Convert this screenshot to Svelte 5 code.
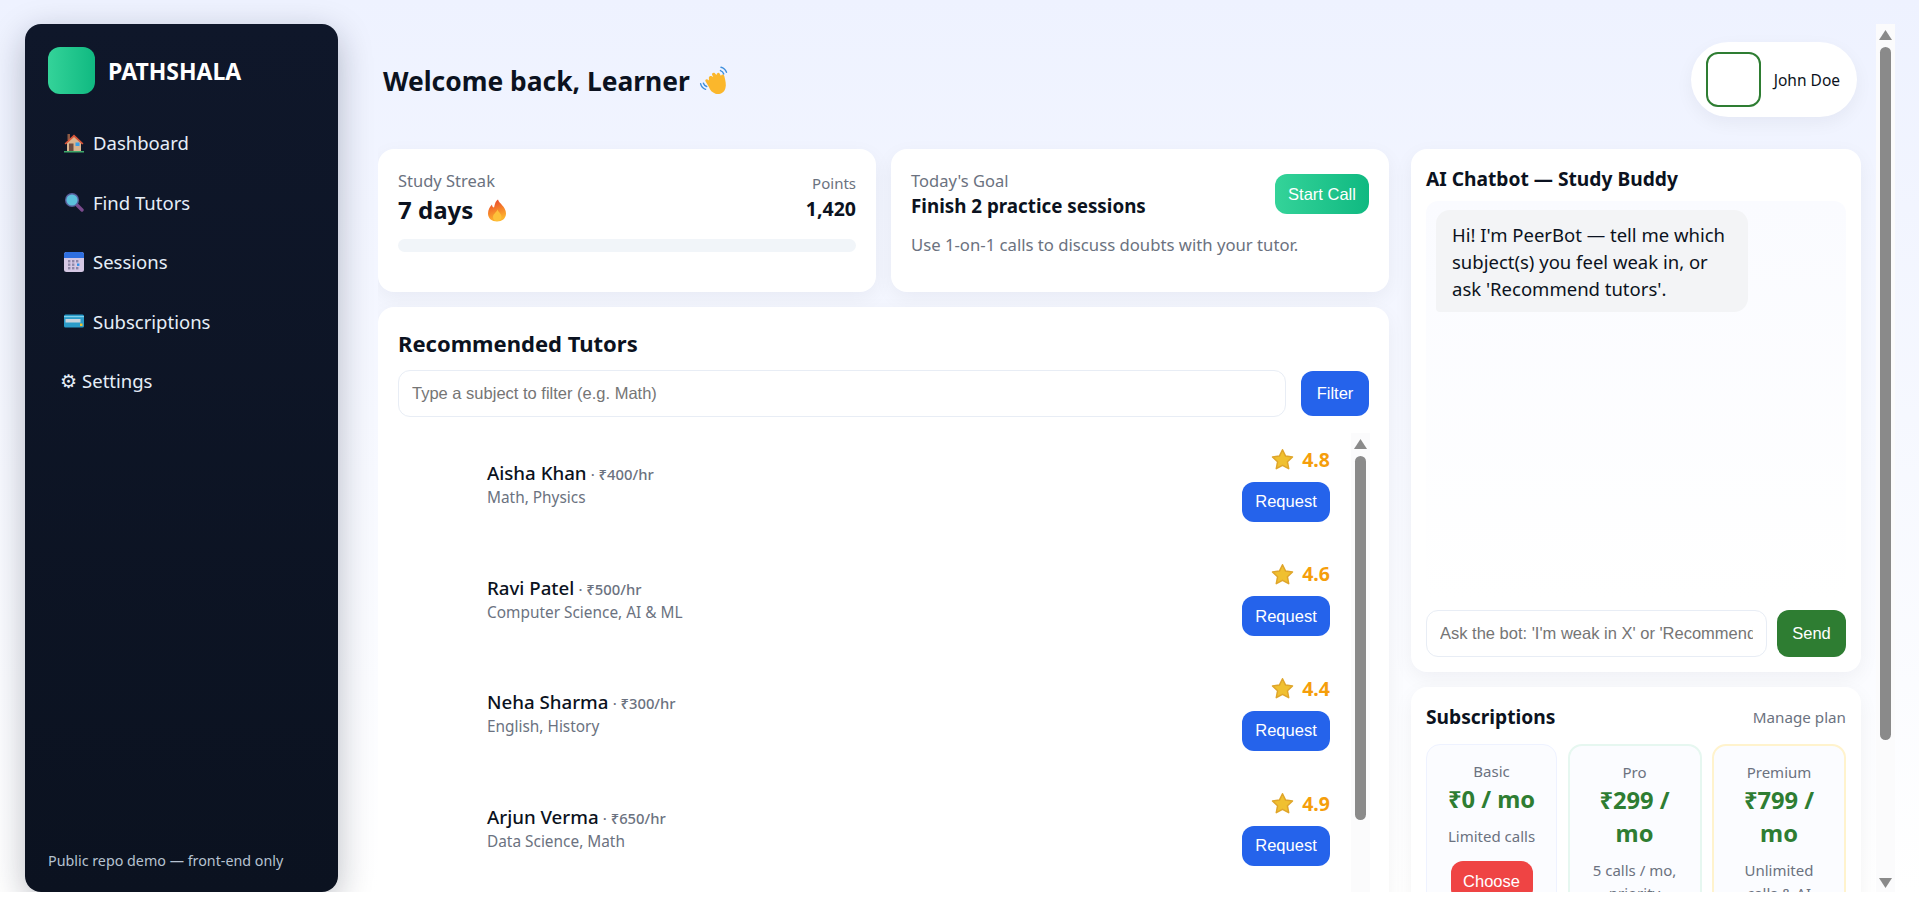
<script>
  const nav = [
    { label: 'Dashboard', icon: 'house' },
    { label: 'Find Tutors', icon: 'search' },
    { label: 'Sessions', icon: 'calendar' },
    { label: 'Subscriptions', icon: 'card' }
  ];

  const tutors = [
    { name: 'Aisha Khan', rate: '₹400/hr', subjects: 'Math, Physics', rating: '4.8' },
    { name: 'Ravi Patel', rate: '₹500/hr', subjects: 'Computer Science, AI & ML', rating: '4.6' },
    { name: 'Neha Sharma', rate: '₹300/hr', subjects: 'English, History', rating: '4.4' },
    { name: 'Arjun Verma', rate: '₹650/hr', subjects: 'Data Science, Math', rating: '4.9' },
    { name: 'Sara Ali', rate: '₹450/hr', subjects: 'Chemistry, Biology', rating: '4.7' }
  ];

  const plans = [
    { name: 'Basic', price: '₹0 / mo', note: 'Limited calls', tone: 'basic', action: true },
    { name: 'Pro', price: '₹299 / mo', note: '5 calls / mo, priority', tone: 'pro', action: false },
    { name: 'Premium', price: '₹799 / mo', note: 'Unlimited calls & AI', tone: 'premium', action: false }
  ];
</script>

{#snippet icon(name)}
  {#if name === 'house'}
    <svg class="emoji" viewBox="0 0 20 20">
      <rect x="3.5" y="1" width="2.5" height="6" fill="#8d5a45" />
      <path d="M3 9 10 3l7 6v9H3z" fill="#d9b48f" />
      <path d="M0.5 10.5 10 1.5l9.5 9-1.3 1L10 4 1.8 11.5z" fill="#d8563a" />
      <rect x="5" y="10.5" width="4.5" height="7.5" fill="#6d4c41" />
      <rect x="11.5" y="9.5" width="4" height="3.5" fill="#3aa0e8" />
      <rect x="0" y="18" width="20" height="1.5" fill="#3fa86b" />
    </svg>
  {:else if name === 'search'}
    <svg class="emoji" viewBox="0 0 20 20">
      <path d="M12.5 12.5 18 18" stroke="#7a4a8c" stroke-width="3.4" stroke-linecap="round" />
      <circle cx="8" cy="8" r="7" fill="#5a5f9e" />
      <circle cx="8" cy="8" r="5.6" fill="#5cc0dc" />
    </svg>
  {:else if name === 'calendar'}
    <svg class="emoji" viewBox="0 0 20 20">
      <rect x="0" y="0" width="20" height="20" rx="2.5" fill="#d5c8e4" />
      <path d="M0 6V2.5A2.5 2.5 0 0 1 2.5 0h15A2.5 2.5 0 0 1 20 2.5V6z" fill="#2f6fe0" />
      <g fill="#8f88a8">
        <rect x="4" y="8" width="2.4" height="2.4" /><rect x="8" y="8" width="2.4" height="2.4" /><rect x="12" y="8" width="2.4" height="2.4" />
        <rect x="4" y="11.5" width="2.4" height="2.4" /><rect x="8" y="11.5" width="2.4" height="2.4" />
        <rect x="4" y="15" width="2.4" height="2.4" /><rect x="8" y="15" width="2.4" height="2.4" /><rect x="12" y="15" width="2.4" height="2.4" />
      </g>
      <rect x="13" y="11.5" width="2.4" height="2.4" fill="#2f8fe8" />
    </svg>
  {:else if name === 'card'}
    <svg class="emoji" viewBox="0 0 20 20">
      <rect x="0" y="3.5" width="20" height="13" rx="1.5" fill="#2b9cc9" />
      <rect x="0" y="5" width="20" height="1.2" fill="#7fd0ea" />
      <rect x="1.5" y="8" width="15" height="3.5" fill="#c9d3dc" />
      <rect x="16" y="12.5" width="2.5" height="2.5" fill="#f2c230" />
    </svg>
  {:else if name === 'fire'}
    <svg class="emoji" viewBox="0 0 20 24">
      <defs>
        <linearGradient id="flame" x1="0" y1="0" x2="0.3" y2="1">
          <stop offset="0" stop-color="#e5392f" />
          <stop offset="0.55" stop-color="#f57f2a" />
          <stop offset="1" stop-color="#fdb52e" />
        </linearGradient>
      </defs>
      <path d="M11 1c1 4 8 7 8 14 0 5-4 8-9 8s-9-3-9-8c0-4 2-7 4-9 0 2 1 3 2 3 1-3 1-6 4-8z" fill="url(#flame)" />
      <path d="M10.5 11c1 3 4 4 4 7.500 0 2.500-2 4-4.500 4s-4-1.500-4-4c0-3 3-4 4.500-7.500z" fill="#fdc13a" />
    </svg>
  {:else if name === 'star'}
    <svg class="emoji" viewBox="0 0 20 20">
      <path d="M10 1.500 12.700 7l6 .8-4.400 4.200 1.100 6L10 15.100 4.600 18l1.100-6L1.300 7.800l6-.8z" fill="#f0c030" stroke="#dfa52a" stroke-width="1.300" stroke-linejoin="round" />
    </svg>
  {:else if name === 'wave'}
    <svg class="emoji" viewBox="0 0 30 30">
      <path d="M9 12c1-2 3-1 4 0l-1-2c-1-2 2-3 3-1l1 1c0-2 2-3 3-1l1 2c0-2 3-2 3 0 1 4 2 8 1 11-1 4-5 6-9 5-3-1-5-3-6-6l-3-5c-1-2 1-3 3-1z" fill="#fbb72c" />
      <path d="M20 3c2 .5 4 2 5 4.500M19.500 6c1.500.5 2.500 1.500 3 3" fill="none" stroke="#3f8fdc" stroke-width="1.300" stroke-linecap="round" />
      <path d="M1.500 18c.5 2 2 4 4.500 5M4 17.500c.5 1.500 1.500 2.500 3 3" fill="none" stroke="#3f8fdc" stroke-width="1.300" stroke-linecap="round" />
    </svg>
  {/if}
{/snippet}

<div class="app">
  <aside class="sidebar">
    <div class="brand">
      <div class="logo"></div>
      <span class="brand-name">PATHSHALA</span>
    </div>
    <nav class="nav">
      {#each nav as item (item.label)}
        <a class="nav-item" href="#top">{@render icon(item.icon)}<span>{item.label}</span></a>
      {/each}
      <a class="nav-item settings" href="#top"><span class="gear">⚙</span><span>Settings</span></a>
    </nav>
    <div class="side-foot">Public repo demo — front-end only</div>
  </aside>

  <main class="main">
    <header class="topbar">
      <h1 class="welcome">Welcome back, Learner <span class="wave">{@render icon('wave')}</span></h1>
      <div class="user">
        <div class="user-avatar"></div>
        <span class="user-name">John Doe</span>
      </div>
    </header>

    <div class="columns">
      <div class="col-left">
        <div class="stats">
          <section class="card stat">
            <div class="stat-row">
              <div>
                <div class="stat-label">Study Streak</div>
                <div class="stat-value">7 days <span class="flame">{@render icon('fire')}</span></div>
              </div>
              <div class="points">
                <div class="points-label">Points</div>
                <div class="points-value">1,420</div>
              </div>
            </div>
            <div class="progress"></div>
          </section>
          <section class="card stat">
            <div class="stat-row">
              <div>
                <div class="stat-label">Today's Goal</div>
                <div class="goal-title">Finish 2 practice sessions</div>
              </div>
              <button class="btn start-call">Start Call</button>
            </div>
            <p class="goal-desc">Use 1-on-1 calls to discuss doubts with your tutor.</p>
          </section>
        </div>

        <section class="card tutors">
          <h2 class="section-title">Recommended Tutors</h2>
          <div class="filter-row">
            <input class="field" placeholder="Type a subject to filter (e.g. Math)" />
            <button class="btn filter">Filter</button>
          </div>
          <div class="tutor-list">
            {#each tutors as tutor (tutor.name)}
              <div class="tutor">
                <div class="tutor-photo"></div>
                <div class="tutor-info">
                  <div class="tutor-line"><span class="tutor-name">{tutor.name}</span> <span class="tutor-rate">· {tutor.rate}</span></div>
                  <div class="tutor-subjects">{tutor.subjects}</div>
                </div>
                <div class="tutor-actions">
                  <div class="rating">{@render icon('star')}<span>{tutor.rating}</span></div>
                  <button class="btn request">Request</button>
                </div>
              </div>
            {/each}
            <div class="fake-bar list-bar">
              <div class="arrow up"></div>
              <div class="thumb"></div>
            </div>
          </div>
        </section>
      </div>

      <div class="col-right">
        <section class="card chat">
          <h2 class="chat-title">AI Chatbot — Study Buddy</h2>
          <div class="chat-window">
            <div class="bubble">Hi! I'm PeerBot — tell me which subject(s) you feel weak in, or ask 'Recommend tutors'.</div>
          </div>
          <div class="chat-input">
            <input class="field" placeholder="Ask the bot: 'I'm weak in X' or 'Recommend tutors'" />
            <button class="btn send">Send</button>
          </div>
        </section>

        <section class="card subs">
          <div class="subs-head">
            <h2 class="chat-title">Subscriptions</h2>
            <span class="manage">Manage plan</span>
          </div>
          <div class="plans">
            {#each plans as plan (plan.name)}
              <div class="plan {plan.tone}">
                <div class="plan-name">{plan.name}</div>
                <div class="plan-price">{plan.price}</div>
                <div class="plan-note">{plan.note}</div>
                {#if plan.action}<button class="btn choose">Choose</button>{/if}
              </div>
            {/each}
          </div>
        </section>
      </div>
    </div>

    <div class="fake-bar main-bar">
      <div class="arrow up"></div>
      <div class="thumb"></div>
      <div class="arrow down"></div>
    </div>
  </main>
</div>

<style>
  :global(body) {
    margin: 0;
    background: #fff;
    color: #0b1220;
    font-family: "Noto Sans", "Open Sans", sans-serif;
  }
  * {
    box-sizing: border-box;
  }
  .app {
    display: flex;
    gap: 40px;
    height: 892px;
    padding: 24px 24px 0 25px;
    background: linear-gradient(180deg, #eef2ff, #fff);
  }
  .emoji {
    display: block;
    width: 20px;
    height: 20px;
    flex: none;
  }

  /* sidebar */
  .sidebar {
    width: 313px;
    flex: none;
    display: flex;
    flex-direction: column;
    padding: 23px 23px 22px;
    border-radius: 16px;
    background: linear-gradient(180deg, #0f172a, #0b1220);
    box-shadow: 0 10px 34px rgba(15, 23, 42, 0.28);
  }
  .brand {
    display: flex;
    align-items: center;
    gap: 13px;
  }
  .logo {
    width: 47px;
    height: 47px;
    border-radius: 12px;
    background: linear-gradient(90deg, #34d399, #10b981);
  }
  .brand-name {
    color: #fff;
    font-size: 23px;
    font-weight: 700;
  }
  .nav {
    display: flex;
    flex-direction: column;
    margin-top: 19px;
  }
  .nav-item {
    display: flex;
    align-items: center;
    gap: 9px;
    height: 59.5px;
    padding-left: 16px;
    color: #e6eef8;
    font-size: 18.5px;
    text-decoration: none;
  }
  .settings {
    padding-left: 12px;
    gap: 5px;
  }
  .gear {
    font-family: "DejaVu Sans", sans-serif;
    font-size: 19px;
  }
  .side-foot {
    margin-top: auto;
    color: #b6c2d1;
    font-size: 14.3px;
  }

  /* main */
  .main {
    flex: 1;
    min-width: 0;
    position: relative;
    overflow: hidden;
    padding-right: 34px;
  }
  .topbar {
    display: flex;
    align-items: center;
    justify-content: space-between;
    padding: 18px 4px 0 5px;
    margin-bottom: 32px;
  }
  .welcome {
    display: flex;
    align-items: center;
    gap: 9px;
    margin: 2px 0 0;
    font-size: 26.4px;
    font-weight: 700;
    color: #0b1220;
  }
  .wave .emoji {
    width: 33px;
    height: 33px;
  }
  .user {
    display: flex;
    align-items: center;
    gap: 13px;
    height: 75px;
    padding: 0 17px 0 15px;
    border-radius: 38px;
    background: #fff;
    box-shadow: 0 6px 18px rgba(15, 23, 42, 0.05);
  }
  .user-avatar {
    width: 55px;
    height: 55px;
    border: 2px solid #2e7d32;
    border-radius: 12px;
  }
  .user-name {
    font-size: 15.500px;
  }
  .columns {
    display: grid;
    grid-template-columns: 1fr 450px;
    gap: 22px;
  }
  .col-left,
  .col-right {
    display: flex;
    flex-direction: column;
    gap: 15px;
    min-width: 0;
  }
  .card {
    background: #fff;
    border-radius: 16px;
    box-shadow: 0 6px 20px rgba(15, 23, 42, 0.05);
  }
  .stats {
    display: grid;
    grid-template-columns: 1fr 1fr;
    gap: 15px;
  }
  .stat {
    height: 143px;
    padding: 20px;
  }
  .stat-row {
    display: flex;
    justify-content: space-between;
    align-items: flex-start;
  }
  .stat-label {
    color: #6b7280;
    font-size: 16.500px;
    line-height: 24px;
  }
  .stat-value {
    display: flex;
    align-items: center;
    gap: 14px;
    margin-top: 1px;
    font-size: 24px;
    font-weight: 700;
    line-height: 32px;
  }
  .flame .emoji {
    width: 20px;
    height: 25px;
  }
  .points {
    text-align: right;
    padding-top: 3px;
  }
  .points-label {
    color: #6b7280;
    font-size: 15px;
    line-height: 22px;
  }
  .points-value {
    font-size: 19.500px;
    font-weight: 700;
    line-height: 30px;
  }
  .progress {
    height: 13px;
    margin-top: 13px;
    border-radius: 7px;
    background: #f1f5f9;
  }
  .goal-title {
    font-size: 18.800px;
    font-weight: 700;
    line-height: 27px;
  }
  .goal-desc {
    margin: 12px 0 0;
    color: #6b7280;
    font-size: 16.700px;
    line-height: 26px;
  }
  .btn {
    border: none;
    border-radius: 12px;
    color: #fff;
    font-family: "Liberation Sans", Arial, sans-serif;
    font-size: 16.500px;
  }
  .start-call {
    width: 94px;
    height: 40px;
    margin-top: 5px;
    background: linear-gradient(90deg, #34d399, #10b981);
  }
  .tutors {
    height: 660px;
    padding: 18px 20px 19px 19px;
  }
  .section-title {
    margin: 0 0 0 1px;
    font-size: 22px;
    font-weight: 700;
    line-height: 36px;
  }
  .filter-row {
    display: flex;
    align-items: center;
    gap: 15px;
    margin-top: 9px;
    padding-left: 1px;
  }
  .field {
    flex: 1;
    min-width: 0;
    height: 47px;
    padding: 0 13px;
    border: 1px solid #e8edf5;
    border-radius: 12px;
    background: #fff;
    outline: none;
    font-family: "Liberation Sans", Arial, sans-serif;
    font-size: 16.500px;
  }
  .field::placeholder {
    color: #757575;
  }
  .filter {
    width: 68px;
    height: 45px;
    background: #2563eb;
  }
  .tutor-list {
    position: relative;
    height: 560px;
    margin-top: 16px;
    padding-right: 39px;
    display: flex;
    flex-direction: column;
    gap: 8.700px;
    overflow: hidden;
    right: -1px;
    margin-left: -1px;
  }
  .tutor {
    display: flex;
    align-items: center;
    gap: 14px;
    height: 106px;
    flex: none;
    position: relative;
    top: -2px;
  }
  .tutor-photo {
    width: 76px;
    height: 76px;
    flex: none;
  }
  .tutor-info {
    flex: 1;
    min-width: 0;
  }
  .tutor-line {
    line-height: 25px;
  }
  .tutor-name {
    font-size: 18.700px;
    font-weight: 500;
  }
  .tutor-rate {
    color: #6b7280;
    font-size: 14.800px;
    font-weight: 500;
  }
  .tutor-subjects {
    color: #6b7280;
    font-size: 15.400px;
    line-height: 21px;
  }
  .tutor-actions {
    display: flex;
    flex-direction: column;
    align-items: flex-end;
    gap: 9px;
  }
  .rating {
    display: flex;
    align-items: center;
    gap: 8px;
    margin-right: 1px;
    color: #f59e0b;
    font-size: 19.500px;
    font-weight: 700;
    line-height: 26px;
  }
  .rating .emoji {
    width: 23px;
    height: 23px;
  }
  .request {
    width: 88px;
    height: 40px;
    margin-right: 1px;
    background: #2563eb;
  }

  /* chat */
  .chat {
    height: 523px;
    padding: 15px;
    display: flex;
    flex-direction: column;
  }
  .chat-title {
    margin: 0;
    font-size: 19.200px;
    font-weight: 700;
    line-height: 30px;
  }
  .chat-window {
    flex: 1;
    margin-top: 7px;
    padding: 9px 10px;
    border-radius: 12px;
    background: linear-gradient(180deg, #fafbff, #fff);
  }
  .bubble {
    width: 312px;
    padding: 11px 16px 10px;
    border-radius: 14px 14px 14px 4px;
    background: #f3f4f6;
    font-size: 18.500px;
    line-height: 27px;
  }
  .chat-input {
    display: flex;
    align-items: center;
    gap: 10px;
    margin-top: 10px;
  }
  .send {
    width: 69px;
    height: 47px;
    background: #2e7d32;
  }

  /* subscriptions */
  .subs {
    height: 300px;
    padding: 15px;
  }
  .subs-head {
    display: flex;
    justify-content: space-between;
    align-items: center;
  }
  .manage {
    color: #6b7280;
    font-size: 15.200px;
  }
  .plans {
    display: grid;
    grid-template-columns: 131fr 134fr 134fr;
    gap: 10.500px;
    margin-top: 12px;
  }
  .plan {
    height: 240px;
    padding: 15px 14px;
    border: 1px solid #eef2ff;
    border-radius: 14px;
    background: #fbfcff;
    text-align: center;
  }
  .plan.pro {
    border: 2px solid #e6f7f0;
  }
  .plan.premium {
    border: 2px solid #fff3cd;
  }
  .plan-name {
    color: #6b7280;
    font-size: 15px;
    line-height: 23px;
  }
  .plan-price {
    color: #2e7d32;
    font-size: 23.700px;
    font-weight: 700;
    line-height: 33px;
  }
  .plan-note {
    margin-top: 9px;
    color: #6b7280;
    font-size: 15px;
    line-height: 23px;
  }
  .choose {
    width: 82px;
    height: 40px;
    margin-top: 13px;
    background: #ef4444;
  }

  /* drawn scrollbars, the capture browser hides native ones */
  .fake-bar {
    position: absolute;
    top: 0;
    bottom: 0;
    right: 0;
    width: 19px;
    background: #fbfbfc;
  }
  .thumb {
    position: absolute;
    left: 4px;
    width: 11px;
    border-radius: 6px;
    background: #8a8a8a;
  }
  .main-bar .thumb {
    top: 23px;
    height: 693px;
  }
  .list-bar .thumb {
    top: 23px;
    height: 364px;
  }
  .arrow {
    position: absolute;
    left: 3px;
    width: 13px;
    height: 10px;
    background: #8a8a8a;
  }
  .arrow.up {
    top: 6px;
    clip-path: polygon(50% 0, 100% 100%, 0 100%);
  }
  .arrow.down {
    bottom: 4px;
    clip-path: polygon(0 0, 100% 0, 50% 100%);
  }
</style>
